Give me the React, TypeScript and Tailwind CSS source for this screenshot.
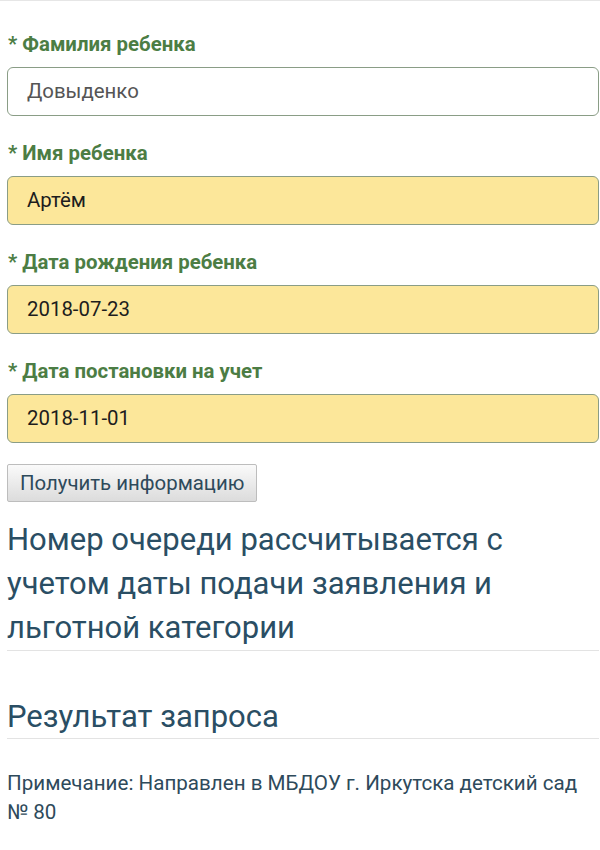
const fields = [
  { label: 'Фамилия ребенка', value: 'Довыденко', filled: false },
  { label: 'Имя ребенка', value: 'Артём', filled: true },
  { label: 'Дата рождения ребенка', value: '2018-07-23', filled: true },
  { label: 'Дата постановки на учет', value: '2018-11-01', filled: true },
]

export default function App() {
  return (
    <div className="w-[600px] min-h-[850px] bg-white font-['Roboto','Liberation_Sans',sans-serif]">
      <div className="border-t border-[#e6e6e6]" />
      <div className="pl-[7px] pr-[1px] pt-[31px]">
        {fields.map((f, idx) => (
          <div key={idx} className={idx > 0 ? 'mt-[25px]' : ''}>
            <div className="h-[24px] leading-[24px] text-[20.4px] font-bold text-[#4c7d44] pl-[1px]">
              * {f.label}
            </div>
            <div
              className={
                'mt-[11px] h-[49px] rounded-[6px] border border-[#8a9d86] px-[19px] flex items-center text-[20.4px] ' +
                (f.filled ? 'bg-[#fce79a] text-[#1d1d1d]' : 'bg-white text-[#555555]')
              }
            >
              {f.value}
            </div>
          </div>
        ))}

        <button className="mt-[21px] h-[38px] px-[12px] border border-[#bdbdbd] rounded-[2px] bg-gradient-to-b from-[#fafafa] to-[#dcdcdc] text-[20.4px] text-[#2e4a5b] leading-none">
          Получить информацию
        </button>

        <h2 className="mt-[16px] pr-[6px] text-[31px] leading-[44px] text-[#2a4e64] border-b border-[#e3e3e3]">
          Номер очереди рассчитывается с учетом даты подачи заявления и льготной категории
        </h2>

        <h2 className="mt-[44px] text-[31px] leading-[43px] text-[#2a4e64] border-b border-[#e3e3e3]">
          Результат запроса
        </h2>

        <p className="mt-[30px] pr-[6px] text-[20.6px] leading-[29px] text-[#2e4a5b]">
          Примечание: Направлен в МБДОУ г. Иркутска детский сад № 80
        </p>
      </div>
    </div>
  )
}
